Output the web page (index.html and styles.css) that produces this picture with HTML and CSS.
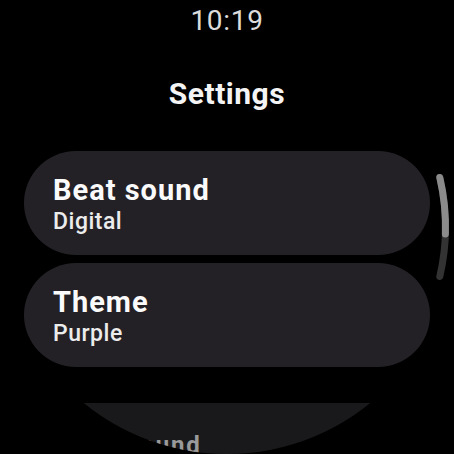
FILE: index.html
```html
<!DOCTYPE html>
<html>
<head>
<meta charset="utf-8">
<link rel="stylesheet" href="styles.css">
</head>
<body>
<div class="screen">
  <div class="time">10:19</div>
  <div class="title">Settings</div>
  <div class="list">
    <div class="card">
      <div class="card-title">Beat sound</div>
      <div class="card-sub">Digital</div>
    </div>
    <div class="card">
      <div class="card-title">Theme</div>
      <div class="card-sub">Purple</div>
    </div>
    <div class="card dim">
      <div class="card-title">Beat sound</div>
      <div class="card-sub">Digital</div>
    </div>
  </div>
  <svg class="scrollbar" width="454" height="454" viewBox="0 0 454 454">
    <path d="M 439.8 177.5 A 218.5 218.5 0 0 1 439.8 276.5" class="track"/>
    <path d="M 439.8 177.5 A 218.5 218.5 0 0 1 445.4 234" class="thumb"/>
  </svg>
</div>
</body>
</html>
```
FILE: styles.css
```css
html, body {
  margin: 0;
  padding: 0;
  background: #000;
}
body {
  width: 454px;
  height: 454px;
  overflow: hidden;
  font-family: Roboto, "Noto Sans", sans-serif;
}
.screen {
  position: relative;
  width: 454px;
  height: 454px;
  border-radius: 50%;
  overflow: hidden;
  background: #000;
  display: flex;
  flex-direction: column;
  align-items: center;
}
.time {
  margin-top: 5px;
  font-size: 28px;
  line-height: 32px;
  color: #dcdcdc;
  letter-spacing: 0.7px;
}
.title {
  margin-top: 40px;
  font-size: 30px;
  line-height: 34px;
  font-weight: 700;
  color: #f4f4f4;
  letter-spacing: 0.5px;
}
.list {
  margin-top: 40px;
  align-self: stretch;
  padding: 0 24px;
  display: flex;
  flex-direction: column;
  gap: 8px;
}
.card {
  flex: none;
  height: 104px;
  box-sizing: border-box;
  border-radius: 52px;
  background: #232126;
  padding: 24px 0 0 29px;
}
.card-title {
  font-size: 29px;
  line-height: 30px;
  font-weight: 700;
  color: #fafafa;
  letter-spacing: 1px;
}
.card-sub {
  margin-top: 2.5px;
  font-size: 23px;
  line-height: 28px;
  font-weight: 500;
  color: #ececec;
  letter-spacing: 0.5px;
}
.card.dim {
  margin: 28px 8px 0;
  background: #19181b;
  padding: 28px 0 0 30px;
}
.card.dim .card-title {
  font-size: 24px;
  line-height: 28px;
  color: #9a9a9a;
  letter-spacing: 1.8px;
}
.card.dim .card-sub {
  color: #8a8a8a;
}
.scrollbar {
  position: absolute;
  left: 0;
  top: 0;
}
.scrollbar path {
  fill: none;
  stroke-width: 7;
  stroke-linecap: round;
}
.scrollbar .track {
  stroke: #333333;
}
.scrollbar .thumb {
  stroke: #8b8b8b;
}
```
